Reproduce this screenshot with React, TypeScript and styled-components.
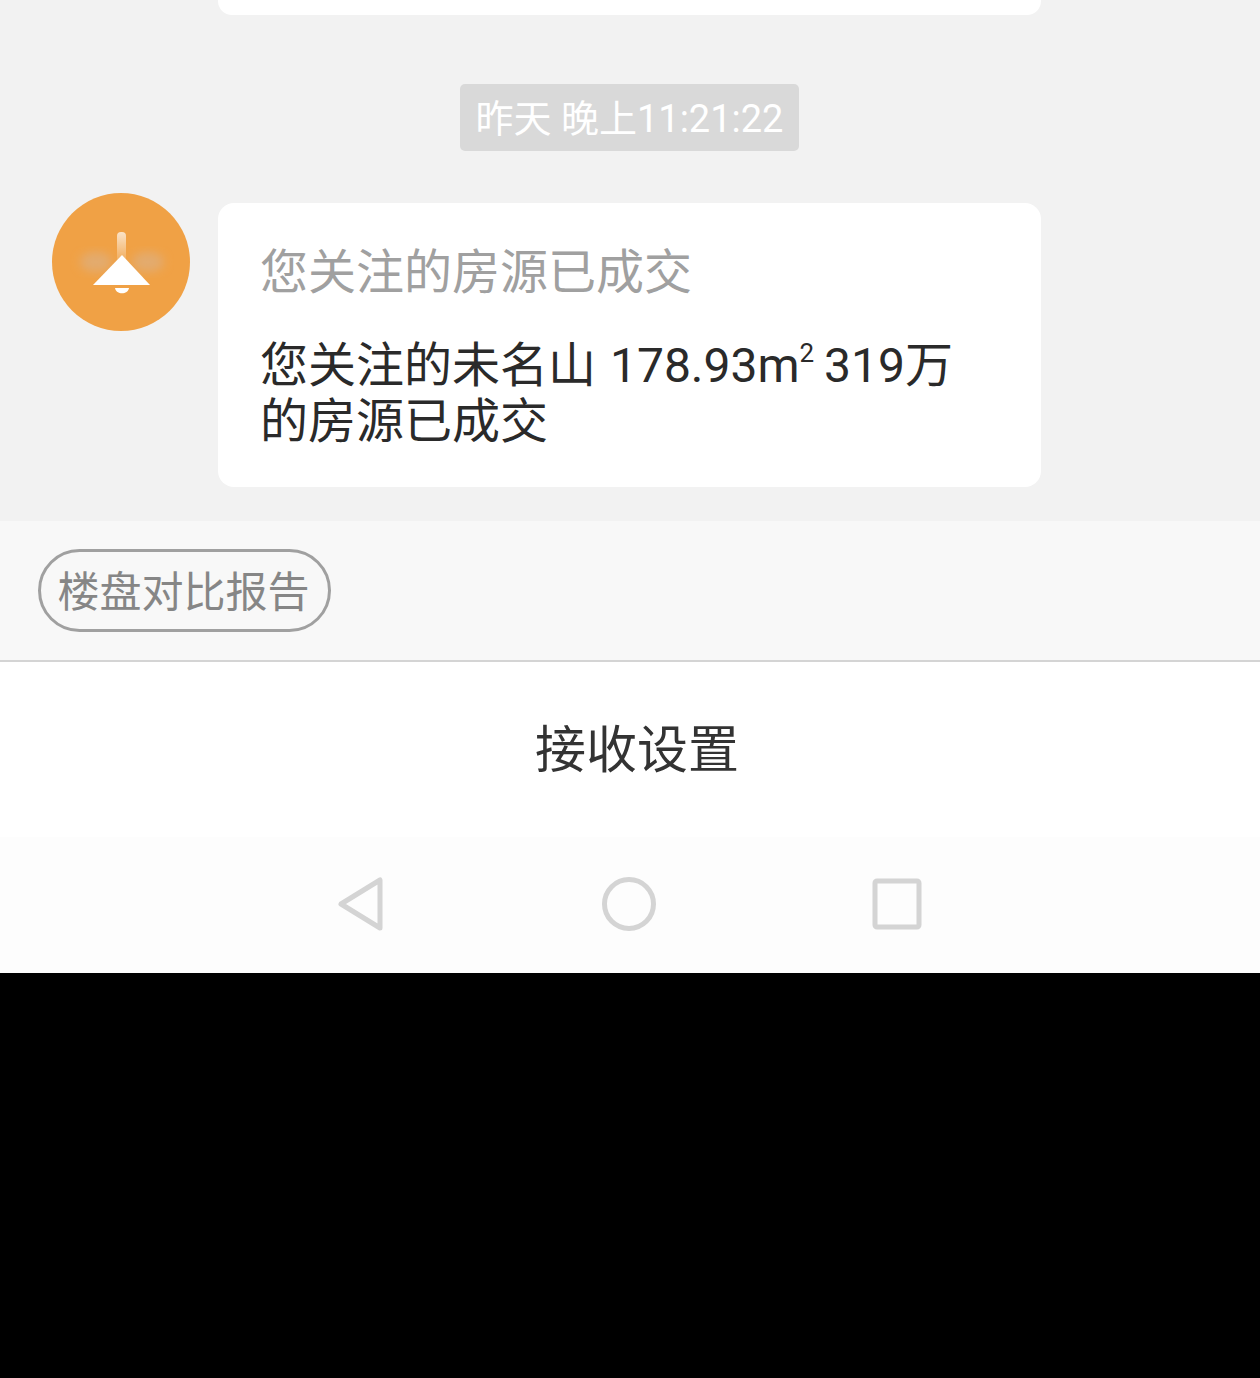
import styled, { createGlobalStyle } from "styled-components";

const GlobalStyle = createGlobalStyle`
  html, body {
    margin: 0;
    padding: 0;
    background-color: #000;
  }
  * {
    box-sizing: border-box;
  }
`;

const Page = styled.div`
  width: 1260px;
  height: 1378px;
  background-color: #000;
  font-family: Roboto, "Noto Sans CJK SC", sans-serif;
  overflow: hidden;
`;
const Screen = styled.main`
  height: 973px;
  display: flex;
  flex-direction: column;
  background-color: #fff;
`;
const ChatArea = styled.section`
  height: 521px;
  background-color: #f2f2f2;
  display: flex;
  flex-direction: column;
`;
const PreviousCard = styled.div`
  width: 823px;
  height: 15px;
  margin-left: 218px;
  background-color: #fff;
  border-radius: 0 0 14px 14px;
`;
const TimeRow = styled.div`
  display: flex;
  justify-content: center;
  margin-top: 69px;
  padding-right: 1px;
`;
const TimeBadge = styled.span`
  width: 339px;
  height: 67px;
  display: flex;
  align-items: center;
  justify-content: center;
  padding-bottom: 4px;
  background-color: #d9d9d9;
  border-radius: 5px;
  color: #fff;
  font-size: 38px;
  white-space: nowrap;
`;
const MessageRow = styled.div`
  display: flex;
  align-items: flex-start;
  gap: 28px;
  margin-top: 42px;
  padding-left: 52px;
`;
const Avatar = styled.svg`
  width: 138px;
  height: 138px;
  flex-shrink: 0;
`;
const Bubble = styled.article`
  width: 823px;
  height: 284px;
  margin-top: 10px;
  padding: 41px 42px 0;
  background-color: #fff;
  border-radius: 16px;
`;
const BubbleTitle = styled.h3`
  margin: 0;
  color: #a0a0a0;
  font-size: 48px;
  font-weight: 400;
  line-height: 57px;
`;
const BubbleBody = styled.p`
  margin: 37px 0 0;
  color: #2a2a2a;
  font-size: 48px;
  font-weight: 400;
  line-height: 56px;
`;
const Area = styled.span`
  margin-left: 2px;
`;
const Superscript = styled.sup`
  margin-right: -2px;
  font-size: 26px;
  line-height: 0;
  vertical-align: 20px;
`;
const ShortcutBar = styled.div`
  height: 141px;
  padding: 28px 0 0 38px;
  background-color: #f8f8f8;
  border-bottom: 2px solid #d4d4d4;
`;
const ShortcutPill = styled.button`
  width: 293px;
  height: 83px;
  padding: 0 2px 5px 0;
  background: transparent;
  border: 3px solid #a0a0a0;
  border-radius: 42px;
  color: #868686;
  font-family: inherit;
  font-size: 42px;
  font-weight: 400;
  white-space: nowrap;
`;
const SettingsRow = styled.div`
  height: 175px;
  display: flex;
  align-items: center;
  justify-content: center;
  padding: 0 0 8px 14px;
  color: #333;
  font-size: 51px;
  font-weight: 400;
`;
const NavBar = styled.nav`
  flex: 1;
  display: flex;
  align-items: flex-start;
  justify-content: center;
  gap: 214px;
  padding: 39px 2px 0 0;
  background-color: #fdfdfd;
`;
const NavIcon = styled.svg`
  width: 54px;
  height: 56px;
  fill: none;
  stroke: #d4d4d4;
  stroke-width: 5;
  stroke-linejoin: round;
`;

export default function App() {
  return (
    <Page>
      <GlobalStyle />
      <Screen>
        <ChatArea>
          <PreviousCard />
          <TimeRow>
            <TimeBadge>昨天 晚上11:21:22</TimeBadge>
          </TimeRow>
          <MessageRow>
            <Avatar viewBox="0 0 138 138">
              <defs>
                <linearGradient id="stem" x1="0" y1="0" x2="0" y2="1">
                  <stop offset="0" stopColor="#fff" stopOpacity="0.7" />
                  <stop offset="1" stopColor="#fff" stopOpacity="0.1" />
                </linearGradient>
                <filter id="soft" x="-30%" y="-30%" width="160%" height="160%">
                  <feGaussianBlur stdDeviation="5" />
                </filter>
              </defs>
              <circle cx="69" cy="69" r="69" fill="#f0a145" />
              <ellipse cx="44" cy="69" rx="16" ry="10" fill="#e3ab6e" filter="url(#soft)" />
              <ellipse cx="96" cy="69" rx="16" ry="10" fill="#e3ab6e" filter="url(#soft)" />
              <rect x="65" y="39" width="9" height="30" rx="4" fill="url(#stem)" />
              <path d="M70 62 L98 92 H41 Z" fill="#fff" />
              <path d="M63 95 H77 C76 102 64 102 63 95 Z" fill="#fff" />
            </Avatar>
            <Bubble>
              <BubbleTitle>您关注的房源已成交</BubbleTitle>
              <BubbleBody>
                您关注的未名山 <Area>178.93m</Area>
                <Superscript>2</Superscript> 319万
                <br />
                的房源已成交
              </BubbleBody>
            </Bubble>
          </MessageRow>
        </ChatArea>
        <ShortcutBar>
          <ShortcutPill>楼盘对比报告</ShortcutPill>
        </ShortcutBar>
        <SettingsRow>接收设置</SettingsRow>
        <NavBar>
          <NavIcon viewBox="0 0 54 56">
            <path d="M46 4 V52 L7 28 Z" />
          </NavIcon>
          <NavIcon viewBox="0 0 54 56">
            <circle cx="27" cy="28" r="24.5" />
          </NavIcon>
          <NavIcon viewBox="0 0 54 56">
            <rect x="5" y="5" width="44" height="46" rx="2" />
          </NavIcon>
        </NavBar>
      </Screen>
    </Page>
  );
}
